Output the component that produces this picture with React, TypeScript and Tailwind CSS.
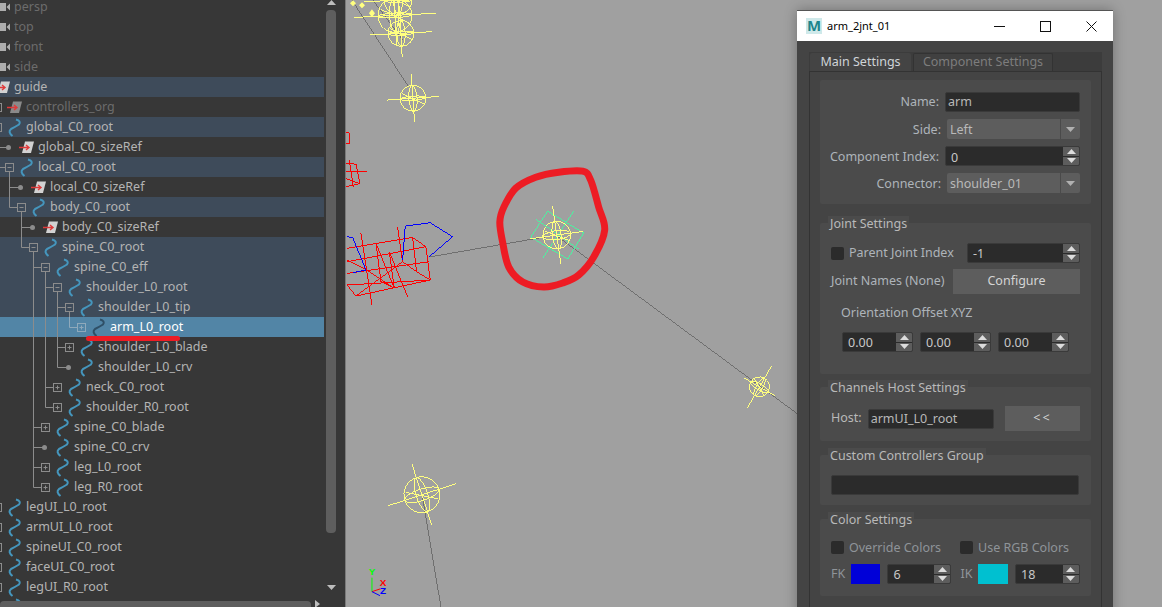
import React from "react";

type Kind = "cam" | "ref" | "curve";
type Exp = "minus" | "plus" | "dot" | "none";
type RowT = { n: string; d: number; k: Kind; e: Exp; v: number[]; last?: boolean; hi?: boolean; sel?: boolean; dim?: boolean };

const col = (d: number) => -2.5 + 12 * d;

const rows: RowT[] = [
  { n: "persp", d: -1, k: "cam", e: "none", v: [], dim: true },
  { n: "top", d: -1, k: "cam", e: "none", v: [], dim: true },
  { n: "front", d: -1, k: "cam", e: "none", v: [], dim: true },
  { n: "side", d: -1, k: "cam", e: "none", v: [], dim: true },
  { n: "guide", d: -1, k: "ref", e: "none", v: [], hi: true },
  { n: "controllers_org", d: 0, k: "ref", e: "plus", v: [], dim: true },
  { n: "global_C0_root", d: 0, k: "curve", e: "plus", v: [], hi: true },
  { n: "global_C0_sizeRef", d: 1, k: "ref", e: "dot", v: [] },
  { n: "local_C0_root", d: 1, k: "curve", e: "minus", v: [], hi: true },
  { n: "local_C0_sizeRef", d: 2, k: "ref", e: "dot", v: [1] },
  { n: "body_C0_root", d: 2, k: "curve", e: "minus", v: [], last: true, hi: true },
  { n: "body_C0_sizeRef", d: 3, k: "ref", e: "dot", v: [2] },
  { n: "spine_C0_root", d: 3, k: "curve", e: "minus", v: [], last: true, hi: true },
  { n: "spine_C0_eff", d: 4, k: "curve", e: "minus", v: [3], hi: true },
  { n: "shoulder_L0_root", d: 5, k: "curve", e: "minus", v: [3, 4], hi: true },
  { n: "shoulder_L0_tip", d: 6, k: "curve", e: "minus", v: [3, 4, 5], hi: true },
  { n: "arm_L0_root", d: 7, k: "curve", e: "plus", v: [3, 4, 5], last: true, sel: true },
  { n: "shoulder_L0_blade", d: 6, k: "curve", e: "plus", v: [3, 4, 5] },
  { n: "shoulder_L0_crv", d: 6, k: "curve", e: "dot", v: [3, 4], last: true },
  { n: "neck_C0_root", d: 5, k: "curve", e: "plus", v: [3, 4] },
  { n: "shoulder_R0_root", d: 5, k: "curve", e: "plus", v: [3], last: true },
  { n: "spine_C0_blade", d: 4, k: "curve", e: "plus", v: [3] },
  { n: "spine_C0_crv", d: 4, k: "curve", e: "dot", v: [3] },
  { n: "leg_L0_root", d: 4, k: "curve", e: "plus", v: [3] },
  { n: "leg_R0_root", d: 4, k: "curve", e: "plus", v: [], last: true },
  { n: "legUI_L0_root", d: 0, k: "curve", e: "plus", v: [] },
  { n: "armUI_L0_root", d: 0, k: "curve", e: "plus", v: [] },
  { n: "spineUI_C0_root", d: 0, k: "curve", e: "plus", v: [] },
  { n: "faceUI_C0_root", d: 0, k: "curve", e: "plus", v: [] },
  { n: "legUI_R0_root", d: 0, k: "curve", e: "plus", v: [] },
  { n: "", d: 0, k: "curve", e: "none", v: [] },
];

function TreeIcon({ r }: { r: RowT }) {
  const tx = 26 + 12 * r.d;
  const cx = col(r.d);
  const ix = tx - 17;
  const px = col(r.d - 1);
  const stroke = r.sel ? "#8fa9bb" : "#8c8c8c";
  return (
    <svg width={tx} height={20} className="block shrink-0">
      {r.v.map((c) => (
        <line key={c} x1={col(c)} x2={col(c)} y1={0} y2={20} stroke="#8c8c8c" />
      ))}
      {r.d >= 1 && r.e !== "none" && (
        <path d={`M${px} 0V${r.last ? 10.5 : 20}M${px} 10.5H${cx}`} stroke={stroke} fill="none" />
      )}
      {r.e === "minus" && <path d={`M${cx} 14V20`} stroke="#8c8c8c" fill="none" />}
      {(r.e === "minus" || r.e === "plus") && (
        <g>
          <rect x={cx - 4} y={6.5} width={8} height={8} fill={r.sel ? "#5285a6" : r.hi ? "#3e4b5a" : "#373737"} stroke={stroke} />
          <path d={`M${cx - 2} 10.5H${cx + 2}${r.e === "plus" ? `M${cx} 8.5V12.5` : ""}`} stroke={stroke} fill="none" />
        </g>
      )}
      {r.e === "dot" && <circle cx={cx - 1} cy={10.5} r={2.5} fill="#8c8c8c" />}
      {r.k === "curve" && (
        <path
          d={`M${ix + 7} 2.5Q${ix + 12.5} 4 ${ix + 10} 7.5Q${ix + 6} 10 ${ix + 2} 12Q${ix - 1.5} 15 ${ix + 3.5} 19`}
          fill="none"
          stroke={r.sel ? "#2f4f66" : "#4596bd"}
          strokeWidth={2}
        />
      )}
      {r.k === "ref" && (
        <g>
          <path d={`M${ix + 4} 4.5H${ix + 13}L${ix + 10} 16H${ix + 1}Z`} fill={r.dim ? "#8a8a8a" : "#d2d2d2"} />
          <path d={`M${ix - 2} 10.5H${ix + 8}M${ix + 5} 8L${ix + 8} 10.5L${ix + 5} 13`} fill="none" stroke="#e03a3a" strokeWidth={1.4} />
        </g>
      )}
      {r.k === "cam" && <path d="M0 6H6V14H0ZM6.5 10L10 6.5V13.5Z" fill="#adadad" />}
    </svg>
  );
}

function Row({ r }: { r: RowT }) {
  const bg = r.sel ? "bg-[#5285a6]" : r.hi ? "bg-[#3e4b5a]" : "";
  const tc = r.sel ? "text-white" : r.dim ? "text-[#6c6c6c]" : "text-[#b4b4b4]";
  return (
    <div className={`flex h-5 shrink-0 items-center overflow-hidden whitespace-nowrap ${bg} ${tc}`}>
      <TreeIcon r={r} />
      <span>{r.n}</span>
    </div>
  );
}

function Tri({ up, className }: { up?: boolean; className?: string }) {
  return (
    <svg width={9} height={5} viewBox="0 0 9 5" className={className}>
      <path d={up ? "M0 5L4.5 0L9 5Z" : "M0 0H9L4.5 5Z"} fill="currentColor" />
    </svg>
  );
}

function Outliner() {
  return (
    <div className="relative flex h-full w-[345px] shrink-0 flex-col bg-[#373737]">
      <div className="flex min-h-0 flex-1">
        <div className="-mt-[3px] flex w-[324px] shrink-0 flex-col overflow-hidden text-[12.5px]">
          {rows.map((r, i) => (
            <Row key={i} r={r} />
          ))}
        </div>
        <div className="flex w-[14px] shrink-0 flex-col items-center text-[#bdbdbd]">
          <Tri up />
          <div className="mt-[5px] h-[523px] w-[10px] rounded bg-[#5e5e5e]" />
          <Tri className="mt-[52px]" />
        </div>
      </div>
      <div className="flex h-[6px] w-[324px] items-center">
        <div className="h-[6px] w-[311px] rounded-t-sm bg-[#5e5e5e]" />
        <svg width={5} height={8} viewBox="0 0 5 8" className="ml-[4px] text-[#bdbdbd]">
          <path d="M0 0L5 4L0 8Z" fill="currentColor" />
        </svg>
      </div>
      <div className="absolute left-[86px] top-[336px] h-[5px] w-[94px] rounded-full bg-[#ed1c24]" />
    </div>
  );
}

function smooth(p: [number, number][]) {
  const n = p.length;
  let d = `M${p[0][0]} ${p[0][1]}`;
  for (let i = 0; i < n; i++) {
    const a = p[(i - 1 + n) % n];
    const b = p[i];
    const c = p[(i + 1) % n];
    const e = p[(i + 2) % n];
    d += `C${b[0] + (c[0] - a[0]) / 6} ${b[1] + (c[1] - a[1]) / 6} ${c[0] - (e[0] - b[0]) / 6} ${c[1] - (e[1] - b[1]) / 6} ${c[0]} ${c[1]}`;
  }
  return d;
}

function Locator({ x, y, r, a = -15, flat = 0.32, lx, ly }: { x: number; y: number; r: number; a?: number; flat?: number; lx?: number; ly?: number }) {
  const LX = lx ?? r * 2.4;
  const LY = ly ?? r * 1.8;
  return (
    <g transform={`translate(${x} ${y}) rotate(${a})`} fill="none" stroke="#ffff80" strokeWidth={1} shapeRendering="crispEdges">
      <circle r={r} />
      <ellipse rx={r} ry={r * flat} />
      <ellipse rx={r * 0.32} ry={r} />
      <line x1={-LX} x2={LX} y1={0} y2={0} />
      <line x1={0} x2={0} y1={-LY} y2={LY} />
      <line x1={-r * 0.8} x2={r * 0.8} y1={-r * 0.4} y2={r * 0.5} />
    </g>
  );
}

function Scene() {
  const sc: [number, number][] = [
    [582, 171], [558, 172], [535, 177], [515, 188], [503, 207], [499, 222], [502, 243], [508, 267],
    [522, 282], [543, 287], [562, 283], [578, 275], [593, 257], [604, 230], [598, 207], [590, 180],
  ];
  const Z = (s: string) =>
    s.split(" ").map((pt) => {
      const [a, b] = pt.split(",").map(Number);
      return `${345 + a / 3},${150 + b / 3}`;
    }).join(" ");
  const redBox = [
    "3,295 200,262 240,290 253,390 30,438 3,405",
    "3,335 240,290",
    "3,370 250,335",
    "3,405 253,390",
    "45,250 78,465",
    "90,280 145,415",
    "130,305 185,440",
    "155,232 170,335 212,365",
    "200,262 212,365 253,390",
    "3,330 60,358 145,415",
    "170,335 30,438",
    "90,280 105,395 145,415",
    "130,305 145,415",
  ];
  const redTop = ["0,40 30,42 42,100 0,110", "0,65 62,65", "10,30 22,110", "0,85 40,100"];
  const blue = ["170,330 178,228 253,218 320,260 250,320", "3,260 20,262 60,360 20,368"];
  return (
    <svg viewBox="345 0 817 607" className="block h-full w-full">
      <g stroke="#6f6f6f" fill="none" shapeRendering="crispEdges">
        <path d="M351 0L408 87" />
        <path d="M372 0L402 40" />
        <path d="M428 257L555 235L797 414" />
        <path d="M421 494L440 607" />
      </g>
      <Locator x={412} y={98} r={13} a={-4} flat={0.16} lx={26} ly={24} />
      <Locator x={421} y={495} r={18} a={-18} lx={36} ly={32} />
      <Locator x={759} y={387} r={10} a={30} lx={18} ly={24} />
      <Locator x={400} y={33} r={13} a={-3} flat={0.14} />
      <Locator x={394} y={15} r={17} a={-3} flat={0.14} />
      <Locator x={397} y={0} r={14} a={-2} flat={0.14} />
      <g fill="#ffff80">
        <path d="M352 0L355 3L352 6L349 3Z" />
        <path d="M361 2L364 5L361 8L358 5Z" />
        <path d="M371 9L374 13L371 17L368 13Z" />
      </g>
      <g fill="none" stroke="#ff0000" strokeWidth={1} shapeRendering="crispEdges">
        {redBox.map((s) => <polyline key={s} points={Z(s)} />)}
        {redTop.map((s) => <polyline key={s} points={Z(s)} />)}
        <polyline points="345,132 349,133 349,143 345,143" />
      </g>
      <g fill="none" stroke="#0000ff" strokeWidth={1} shapeRendering="crispEdges">
        {blue.map((s) => <polyline key={s} points={Z(s)} />)}
      </g>
      <g fill="none" stroke="#4cf2a0" shapeRendering="crispEdges">
        <path d="M547 211L583 233L567 259L530 237Z" />
        <path d="M573 211L542 258M535 219L578 249" />
      </g>
      <Locator x={556} y={235} r={14} a={-8} lx={27} ly={29} />
      <path d={smooth(sc)} fill="none" stroke="#ed1c24" strokeWidth={7} />
      <g fontFamily="'Liberation Sans', sans-serif" fontSize={10} fontWeight={700} textAnchor="middle">
        <path d="M371 578V592" stroke="#00ff00" fill="none" />
        <path d="M371 592L380 589" stroke="#ff0000" fill="none" />
        <path d="M371 592L379 596" stroke="#0000ff" fill="none" />
        <text x={371} y={575} fill="#00ff00">Y</text>
        <text x={382} y={586} fill="#ff0000">X</text>
        <text x={382} y={594} fill="#0000ff">Z</text>
      </g>
    </svg>
  );
}

function Spin({ v, w, className = "", low }: { v: string; w: string; className?: string; low?: boolean }) {
  return (
    <div className={`flex h-[20px] shrink-0 overflow-hidden rounded-[2px] border border-[#3a3a3a] bg-[#2b2b2b] ${w} ${className}`}>
      <span className={`flex-1 pl-[5px] leading-[18px] text-[#c8c8c8] ${low ? "pt-[2px]" : "pt-[1px]"}`}>{v}</span>
      <div className="flex w-[16px] flex-col gap-px bg-[#2b2b2b] text-[#dcdcdc]">
        <div className="flex flex-1 items-center justify-center bg-[#5d5d5d]"><Tri up /></div>
        <div className="flex flex-1 items-center justify-center bg-[#5d5d5d]"><Tri /></div>
      </div>
    </div>
  );
}

function Combo({ v }: { v: string }) {
  return (
    <div className="flex h-[20px] w-[133px] items-center rounded-[2px] bg-[#5d5d5d]">
      <span className="flex-1 pl-[3px] pt-[2px] text-[#b9b9b9]">{v}</span>
      <div className="flex h-full w-[20px] items-center justify-center border-l border-[#4a4a4a] text-[#b0b0b0]"><Tri /></div>
    </div>
  );
}

function Field({ v, w }: { v?: string; w: string }) {
  return (
    <div className={`h-[20px] shrink-0 rounded-[2px] border border-[#3a3a3a] bg-[#2b2b2b] pl-[2px] leading-[18px] text-[#b9b9b9] ${w}`}>{v}</div>
  );
}

function Check() {
  return <div className="h-[13px] w-[13px] shrink-0 rounded-[2px] bg-[#2b2b2b]" />;
}

function Group({ title, h, className = "", children }: { title?: string; h: string; className?: string; children: React.ReactNode }) {
  return (
    <div className={`relative shrink-0 rounded-[2px] bg-[#4b4b4b] px-[11px] ${h} ${className}`}>
      {title && <div className="absolute -top-[7px] left-[8px] bg-[#4b4b4b] px-[2px] leading-[15px] text-[#b9b9b9]">{title}</div>}
      {children}
    </div>
  );
}

function FormRow({ label, children, className = "", low }: { label: string; children: React.ReactNode; className?: string; low?: boolean }) {
  return (
    <div className={`flex h-[20px] items-center justify-end whitespace-nowrap ${className}`}>
      <span className={`mr-[6px] text-[#aeb4ba] ${low ? "pt-[2px]" : ""}`}>{label}</span>
      {children}
    </div>
  );
}

function SettingsWindow() {
  return (
    <div className="absolute left-[451px] top-[10px] flex h-[620px] w-[316px] flex-col border-t border-[#555] bg-[#444444] text-[12.5px] shadow-[0_0_12px_rgba(0,0,0,0.3)]">
      <div className="flex h-[30px] shrink-0 items-center bg-white pl-[9px] text-black">
        <div className="flex h-[16px] w-[16px] items-start justify-center bg-[#cfe9ea] text-[15px] font-bold leading-[14px] text-[#1f858c]">M</div>
        <span className="ml-[5px] text-[11px]">arm_2jnt_01</span>
        <svg width={11} height={11} viewBox="0 0 11 11" className="ml-[104px]" stroke="#111" fill="none"><path d="M0 5.5H11" /></svg>
        <svg width={11} height={11} viewBox="0 0 11 11" className="ml-[35px]" stroke="#111" fill="none"><rect x={0.5} y={0.5} width={10} height={10} /></svg>
        <svg width={11} height={11} viewBox="0 0 11 11" className="ml-[35px]" stroke="#111" fill="none"><path d="M0.5 0.5L10.5 10.5M10.5 0.5L0.5 10.5" /></svg>
      </div>
      <div className="ml-[12px] mr-[11px] mt-[11px] flex h-[19px] shrink-0 items-end bg-[#3c3c3c] pl-[1px]">
        <div className="flex h-[18px] w-[101px] items-center justify-center rounded-t-[2px] bg-[#444444] text-[#cfd4d8]">Main Settings</div>
        <div className="ml-[2px] flex h-[18px] w-[140px] items-center justify-center rounded-t-[2px] border border-b-0 border-[#333] bg-[#404040] text-[#7d7d7d]">Component Settings</div>
      </div>
      <div className="ml-[12px] mr-[11px] flex flex-1 flex-col border-x border-t border-[#333] bg-[#444444] px-[10px] pt-[8px]">
        <Group h="h-[124px]" className="pt-[12px]">
          <FormRow label="Name:"><Field v="arm" w="w-[135px]" /></FormRow>
          <FormRow label="Side:" low className="mt-[7px]"><Combo v="Left" /></FormRow>
          <FormRow label="Component Index:" low className="mt-[7px]"><Spin v="0" w="w-[135px]" low /></FormRow>
          <FormRow label="Connector:" low className="mt-[7px]"><Combo v="shoulder_01" /></FormRow>
        </Group>
        <Group title="Joint Settings" h="h-[151px]" className="mt-[19px] pt-[20px]">
          <div className="flex h-[20px] items-center">
            <Check />
            <span className="ml-[5px] text-[#aeb4ba]">Parent Joint Index</span>
            <Spin v="-1" w="w-[113px]" className="ml-auto" />
          </div>
          <div className="mt-[6px] flex h-[25px] items-center">
            <span className="text-[#aeb4ba]">Joint Names (None)</span>
            <div className="ml-auto flex h-[25px] w-[127px] items-center justify-center bg-[#5d5d5d] text-[#d4d4d4]">Configure</div>
          </div>
          <div className="mt-[10px] pl-[10px] leading-[17px] text-[#aeb4ba]">Orientation Offset XYZ</div>
          <div className="mt-[11px] flex gap-[7px] pl-[11px]">
            <Spin v="0.00" w="w-[71px]" />
            <Spin v="0.00" w="w-[71px]" />
            <Spin v="0.00" w="w-[71px]" />
          </div>
        </Group>
        <Group title="Channels Host Settings" h="h-[54px]" className="mt-[13px] pt-[19px]">
          <div className="flex h-[25px] items-center">
            <span className="text-[#b9b9b9]">Host:</span>
            <Field v="armUI_L0_root" w="ml-[6px] w-[126px]" />
            <div className="ml-auto flex h-[25px] w-[75px] items-center justify-center bg-[#5d5d5d] tracking-[2px] text-[#d4d4d4]">&lt;&lt;</div>
          </div>
        </Group>
        <Group title="Custom Controllers Group" h="h-[50px]" className="mt-[14px] pt-[20px]">
          <Field w="w-[248px]" />
        </Group>
        <Group title="Color Settings" h="h-[77px]" className="mt-[14px] pt-[22px]">
          <div className="flex h-[13px] items-center">
            <div className="flex w-[129px] shrink-0 items-center">
              <Check />
              <span className="ml-[5px] whitespace-nowrap pt-[2px] text-[#8f9499]">Override Colors</span>
            </div>
            <Check />
            <span className="ml-[5px] whitespace-nowrap pt-[2px] text-[#8f9499]">Use RGB Colors</span>
          </div>
          <div className="mt-[10px] flex h-[20px] items-center">
            <span className="w-[20px] text-[#8f9499]">FK</span>
            <div className="h-[20px] w-[30px] bg-[#0000d8]" />
            <Spin v="6" w="ml-[7px] w-[64px]" />
            <span className="ml-[9px] w-[18px] text-[#8f9499]">IK</span>
            <div className="h-[20px] w-[30px] bg-[#00c0d0]" />
            <Spin v="18" w="ml-[7px] w-[65px]" />
          </div>
        </Group>
      </div>
    </div>
  );
}

export default function App() {
  return (
    <div className="relative flex h-[607px] w-[1162px] overflow-hidden font-['Noto_Sans',sans-serif]">
      <Outliner />
      <div className="relative h-full min-w-0 flex-1 border-l border-[#7a7a7a] bg-[#a0a0a0]">
        <Scene />
        <SettingsWindow />
      </div>
    </div>
  );
}
